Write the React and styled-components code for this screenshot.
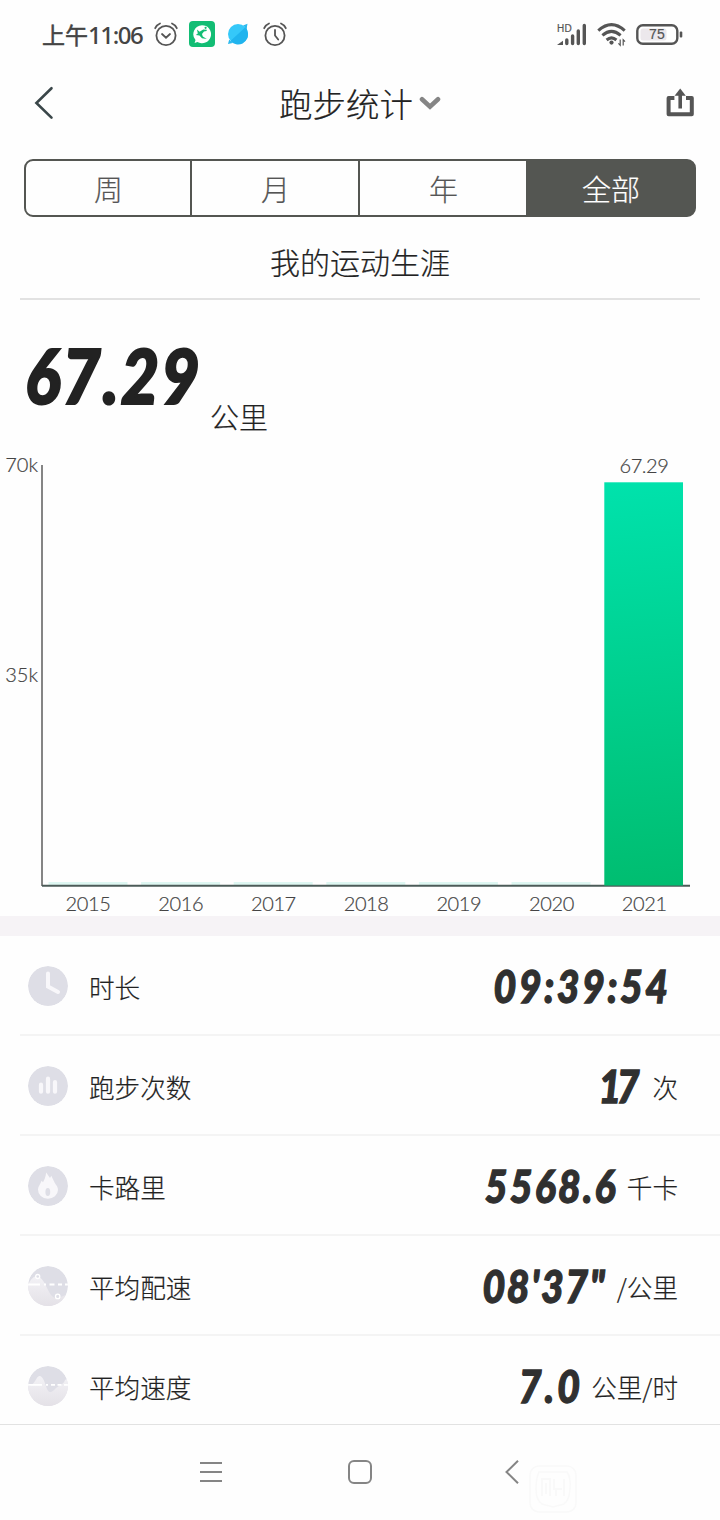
import React from 'react'
import styled, { createGlobalStyle } from 'styled-components'


const years = ['2015', '2016', '2017', '2018', '2019', '2020', '2021']
const tabs = ['周', '月', '年', '全部']

const stats = [
    { icon: 'clock', label: '时长', value: '09:39:54', unit: '', spacing: 2.9 },
    { icon: 'bars', label: '跑步次数', value: '17', unit: '次', spacing: -5 },
    { icon: 'flame', label: '卡路里', value: '5568.6', unit: '千卡', spacing: 2.6 },
    { icon: 'pace', label: '平均配速', value: '08\'37"', unit: '/公里', spacing: 1.9 },
    { icon: 'speed', label: '平均速度', value: '7.0', unit: '公里/时', spacing: 3.8 },
]


const AlarmIcon = ({ hands }) => (
    <svg width="24" height="26" viewBox="0 0 24 26" fill="none" stroke="#555" strokeWidth="1.8" strokeLinecap="round">
        <circle cx="12" cy="14.5" r="9.6" />
        <path d="M1.2 7.2Q2.6 3.8 6 2.5M22.8 7.2Q21.4 3.8 18 2.5" />
        <path d={hands} />
    </svg>
)

const RunnerIcon = () => (
    <svg width="26" height="26" viewBox="0 0 26 26">
        <rect width="26" height="26" rx="4" fill="#12bd74" />
        <path d="M13 4.2a9 9 0 1 1-4.6 16.7L5.6 22l.9-3A9 9 0 0 1 13 4.2z" fill="#fff" />
        <path d="M8 8.6l2.6 2.2 3.6-2.2 3.6.1-.2 1.2-2.6.6-2 2.4.8 2.6 4 2.4-4.8-.7-2.6-2.7-3.6-.4 2-1.6z" fill="#12bd74" />
        <circle cx="16.6" cy="6.8" r="1.1" fill="#12bd74" />
    </svg>
)

const PlanetIcon = () => (
    <svg width="22" height="22" viewBox="0 0 22 22">
        <circle cx="11" cy="11" r="10" fill="#35c8f9" />
        <path d="M19.2 3.5L3.4 18a10 10 0 0 0 17.3-9z" fill="#20b4ee" />
        <path d="M16 2.5L20.5.8 19.6 5.4zM1 21l1.2-4.4 3.4 3.4z" fill="#2ab9ee" />
    </svg>
)

const SignalIcon = () => (
    <svg width="31" height="26" viewBox="0 0 31 26">
        <SmallText x="0" y="9.7" fontSize="10">HD</SmallText>
        <g stroke="#555" strokeWidth="3.4" strokeLinecap="round">
            <path d="M9.8 21.5V18M15.6 21.5V14M21.3 21.5V9M27.3 21.5V3.5" />
            <path d="M3 22l2-1.4V22z" strokeWidth="2" />
        </g>
    </svg>
)

const WifiIcon = () => (
    <svg width="30" height="25" viewBox="0 0 30 25" fill="none" stroke="#555" strokeWidth="3">
        <path d="M1.3 8.6Q14.5-3.4 27.7 8.6M5.4 13.3Q14.5 5.4 23.6 13.3M9.6 18Q14.5 13.8 19.4 18" />
        <circle cx="14.5" cy="20.6" r="2.1" fill="#555" stroke="none" />
        <path d="M23.2 17.5v5.8l-1.8-2M26.2 23.5v-5.8l1.8 2" strokeWidth="1.2" />
    </svg>
)

const BatteryIcon = () => (
    <svg width="48" height="22" viewBox="0 0 48 22">
        <rect x="1.3" y="1.3" width="40" height="18.4" rx="5.5" fill="#fff" stroke="#555" strokeWidth="2.4" />
        <rect x="4.5" y="4.4" width="26" height="12.2" rx="2.5" fill="#ece8ec" />
        <rect x="43.7" y="7.5" width="2.6" height="6" rx="1" fill="#555" />
        <SmallText x="21" y="15.4" fontSize="14" textAnchor="middle">75</SmallText>
    </svg>
)

const BackIcon = () => (
    <svg width="20" height="34" viewBox="0 0 20 34" fill="none" stroke="#3a4649" strokeWidth="2.6" strokeLinecap="round">
        <path d="M17.5 2.2L2.4 17 17.5 31.6" />
    </svg>
)

const ChevronIcon = () => (
    <svg width="22" height="15" viewBox="0 0 22 15" fill="none" stroke="#858585" strokeWidth="4.6" strokeLinecap="round">
        <path d="M3 3.2l8 7.4 8-7.4" />
    </svg>
)

const ShareIcon = () => (
    <svg width="30" height="31" viewBox="0 0 30 31" fill="none" stroke="#555" strokeWidth="4" strokeLinejoin="round">
        <path d="M9.4 10H3.6v16.2h23.2V10H21" />
        <path d="M15.2 20.5V7" strokeWidth="3.6" />
        <path d="M15.2.6l5.6 7.2H9.6z" fill="#555" stroke="none" />
    </svg>
)

const StatIcon = ({ kind }) => (
    <Disc width="40" height="40" viewBox="0 0 40 40">
        <defs>
            <clipPath id={`disc-${kind}`}><circle cx="20" cy="20" r="20" /></clipPath>
            <linearGradient id={`hill-${kind}`} x1="0" y1="0" x2="0" y2="1">
                <stop offset="0" stopColor="#f3f2f6" />
                <stop offset="1" stopColor="#e4e1e7" />
            </linearGradient>
        </defs>
        <g clipPath={`url(#disc-${kind})`}>
            <circle cx="20" cy="20" r="20" fill="#dedee6" />
            {kind === 'clock' && (
                <path d="M20 7.5v13L30 26" fill="none" stroke="#f8f7fa" strokeWidth="4" strokeLinecap="round" />
            )}
            {kind === 'bars' && (
                <path d="M13 18.7v7M20 12.7v13M27 16v9.7" stroke="#f8f7fa" strokeWidth="4.2" strokeLinecap="round" />
            )}
            {kind === 'flame' && (
                <>
                    <path d="M18.2 6.5L22 12l1.3-2.2 3.5 7.2c1.6 2.4 3.2 3.8 3.2 7A10 9 0 0 1 10 23.6c0-3.2 2.2-5 3.6-8.8l1.4 1.4c1.6-2.6 2.6-5.6 3.2-9.7z" fill="#f8f7fa" />
                    <ellipse cx="19.8" cy="26" rx="2.4" ry="4" fill="#dedee6" />
                </>
            )}
            {kind === 'pace' && (
                <>
                    <path d="M0 19C4 11 7 9.5 10 10.5c6 2 8 11 13 18.5 4 5 8 3 17-1v12H0z" fill="url(#hill-pace)" />
                    <path d="M0 18.5h12M16 18.5h2M21.5 18.5h5M30 18.5h4M37 18.5h3" stroke="#fff" strokeWidth="2" />
                    <circle cx="9.7" cy="10.5" r="2" fill="#dedee6" stroke="#fff" strokeWidth="1.3" />
                    <circle cx="29.7" cy="30.4" r="2.2" fill="#dedee6" stroke="#fff" strokeWidth="1.3" />
                </>
            )}
            {kind === 'speed' && (
                <>
                    <path d="M0 20C7 20 8 10 11.5 10S17 17 19 23c3 6 6 2 9-1 4-3 8-4 9-8l3-2v28H0z" fill="url(#hill-speed)" />
                    <path d="M0 18.8h14M18 18.8h2M23 18.8h4M29.5 18.8h4M36 18.8h4" stroke="#fff" strokeWidth="1.8" />
                </>
            )}
        </g>
    </Disc>
)

const Chart = () => (
    <svg width="720" height="466" viewBox="0 450 720 466">
        <defs>
            <linearGradient id="bar" gradientUnits="userSpaceOnUse" x1="620" y1="482" x2="660" y2="886">
                <stop offset="0" stopColor="#00e2ac" />
                <stop offset="1" stopColor="#00bd70" />
            </linearGradient>
        </defs>
        <AxisText x="38" y="472" textAnchor="end" $tight>70k</AxisText>
        <AxisText x="38" y="682" textAnchor="end" $tight>35k</AxisText>
        {years.slice(0, 6).map((year, i) => (
            <rect key={year} x={48.5 + i * 92.6} y="882" width="79" height="3" fill="#def7f2" />
        ))}
        <path d="M42 465v421" stroke="#858585" strokeWidth="2" />
        <path d="M42 885.8h648" stroke="#4c5b58" strokeWidth="2" />
        <rect x="604.3" y="482.3" width="78.7" height="403.2" fill="url(#bar)" />
        <AxisText x="644" y="473" textAnchor="middle">67.29</AxisText>
        {years.map((year, i) => (
            <AxisText key={year} x={88 + i * 92.7} y="911" textAnchor="middle">{year}</AxisText>
        ))}
    </svg>
)


const App = () => {


    return (
        <Screen>
            <GlobalStyle />

            <StatusBar>
                <Clock>上午<Time>11:06</Time></Clock>
                <Notices>
                    <AlarmIcon hands="M8 13l4 3.7 4-3.7" />
                    <RunnerIcon />
                    <PlanetIcon />
                    <AlarmIcon hands="M12 9v5.5l3.2 4" />
                </Notices>
                <Signals>
                    <SignalIcon />
                    <WifiIcon />
                    <BatteryIcon />
                </Signals>
            </StatusBar>

            <Header>
                <BackIcon />
                <Title>跑步统计 <ChevronIcon /></Title>
                <ShareIcon />
            </Header>

            <Tabs>
                {tabs.map((tab) => (
                    <Tab key={tab} $active={tab === '全部'}>{tab}</Tab>
                ))}
            </Tabs>

            <Subtitle>我的运动生涯</Subtitle>

            <Total>
                <TotalValue>67.29</TotalValue>
                <TotalUnit>公里</TotalUnit>
            </Total>

            <Chart />
            <Band />

            <List>
                {stats.map((stat) => (
                    <Row key={stat.icon}>
                        <StatIcon kind={stat.icon} />
                        <Label>{stat.label}</Label>
                        <Value $spacing={stat.spacing} $alone={!stat.unit}>{stat.value}</Value>
                        {stat.unit && <Unit>{stat.unit}</Unit>}
                    </Row>
                ))}
            </List>

            <NavBar>
                <svg width="22" height="22" viewBox="0 0 22 22" stroke="#858585" strokeWidth="2">
                    <path d="M0 2h22M0 11h22M0 20h22" />
                </svg>
                <svg width="24" height="24" viewBox="0 0 24 24" fill="none" stroke="#858585" strokeWidth="2">
                    <rect x="1" y="1" width="22" height="22" rx="5" />
                </svg>
                <svg width="14" height="24" viewBox="0 0 14 24" fill="none" stroke="#858585" strokeWidth="2">
                    <path d="M13 .8L1.5 12 13 23.2" />
                </svg>
                <Stamp width="48" height="48" viewBox="0 0 48 48" fill="none" stroke="#f9f9f9" strokeWidth="1.5">
                    <rect x="1" y="1" width="46" height="46" rx="9" />
                    <path d="M10 7h28q4 5 3 17t-6 15l-11 3-11-3q-6-4-6-15t3-17z" />
                    <path d="M13 31V14h8v17M17 18v11M25 14v10h8M27 31V24M35 14v17" strokeWidth="2" />
                </Stamp>
            </NavBar>
        </Screen>
    )
}


const GlobalStyle = createGlobalStyle`
    body{
        margin:0;
        background:#fefefe;
    }
    *{
        box-sizing:border-box;
    }
    svg{
        display:block;
        flex-shrink:0;
    }
`

const Screen = styled.div`
    width:720px;
    height:1520px;
    display:flex;
    flex-direction:column;
    overflow:hidden;
    background:#fefefe;
    color:#222;
    font-family:"Noto Sans CJK SC", sans-serif;
    font-weight:300;
    -webkit-text-stroke:.2px;
`

const StatusBar = styled.div`
    height:69px;
    display:flex;
    align-items:center;
    padding:0 36px 0 42px;
    flex-shrink:0;
`

const Clock = styled.span`
    width:112px;
    font-size:23px;
    font-weight:400;
    line-height:30px;
    color:#444;
    white-space:nowrap;
    -webkit-text-stroke:.5px;
`

const Time = styled.span`
    font-family:"Noto Sans", sans-serif;
    font-size:24px;
    font-weight:500;
    letter-spacing:-1.4px;
    -webkit-text-stroke:0;
`

const Notices = styled.div`
    display:grid;
    grid-template-columns:35px 38px 36px 24px;
    align-items:center;
    margin-top:-2px;
`

const Signals = styled.div`
    display:flex;
    align-items:center;
    gap:9px;
    margin-left:auto;
`

const SmallText = styled.text`
    font-family:"Liberation Sans", sans-serif;
    letter-spacing:.2px;
    stroke:#555;
    stroke-width:.2px;
    fill:#555;
`

const Header = styled.header`
    height:68px;
    display:flex;
    align-items:center;
    justify-content:space-between;
    padding:0 25px 0 34px;
    flex-shrink:0;
`

const Title = styled.h1`
    display:flex;
    align-items:center;
    gap:6px;
    margin:0 0 0 1px;
    font-size:33.5px;
    font-weight:300;
    line-height:40px;
`

const Tabs = styled.div`
    height:58px;
    display:grid;
    grid-template-columns:165px 168px 168px 167px;
    margin:22px 24px 0;
    border:2px solid #545652;
    border-radius:9px;
    overflow:hidden;
    background:linear-gradient(90deg, transparent 90%, #545652 90%);
    flex-shrink:0;
`

const Tab = styled.div`
    display:flex;
    align-items:center;
    justify-content:center;
    border-left:2px solid #545652;
    margin-left:-1px;
    padding-bottom:1px;
    font-size:29px;
    color:${props => props.$active ? '#fff' : '#555'};
    background:${props => props.$active ? '#545652' : 'transparent'};

    &:first-child{
        border-left:0;
        margin-left:0;
    }
`

const Subtitle = styled.h2`
    height:83px;
    margin:0 20px;
    border-bottom:2px solid #e2e2e2;
    font-size:30px;
    font-weight:300;
    line-height:88px;
    text-align:center;
    flex-shrink:0;
`

const Total = styled.div`
    height:150px;
    display:flex;
    align-items:flex-start;
    padding-left:25px;
    flex-shrink:0;
`

const TotalValue = styled.strong`
    width:185px;
    margin-top:31px;
    font-family:Lato, sans-serif;
    font-size:76px;
    font-style:italic;
    font-weight:900;
    line-height:88px;
    letter-spacing:2.4px;
    white-space:nowrap;
    transform:scaleX(.87);
    transform-origin:left;
    -webkit-text-stroke:2.2px;
`

const TotalUnit = styled.span`
    margin-top:96px;
    font-size:29px;
    line-height:40px;
`

const AxisText = styled.text`
    font-family:Lato, sans-serif;
    font-size:20px;
    font-weight:300;
    letter-spacing:${props => props.$tight ? '0' : '-.4px'};
    stroke:#444;
    stroke-width:.2px;
    fill:#444;
`

const Band = styled.div`
    height:20px;
    background:#f6f3f6;
    flex-shrink:0;
`

const List = styled.div`
    height:488px;
    overflow:hidden;
    flex-shrink:0;
`

const Row = styled.div`
    height:100px;
    display:flex;
    align-items:center;
    margin-left:20px;
    padding:0 42px 0 8px;
    border-bottom:2px solid #f4f4f4;
`

const Disc = styled.svg`
    margin-top:2px;
`

const Label = styled.span`
    margin:2px auto 0 21px;
    font-size:25.6px;
`

const Value = styled.strong`
    margin-right:${props => (props.$alone ? 10 : 1.5) - props.$spacing}px;
    margin-top:2px;
    color:#303030;
    font-family:Lato, sans-serif;
    font-size:45px;
    font-style:italic;
    font-weight:900;
    line-height:54px;
    letter-spacing:${props => props.$spacing}px;
    transform:scaleX(.87);
    transform-origin:right;
    -webkit-text-stroke:1.3px;
`

const Unit = styled.span`
    margin:2px 0 0 10.5px;
    font-size:25.6px;
`

const NavBar = styled.nav`
    position:relative;
    height:96px;
    display:grid;
    grid-template-columns:148px 157px 14px;
    align-items:center;
    padding:0 0 2px 200px;
    border-top:1px solid #e2e2e2;
`

const Stamp = styled.svg`
    position:absolute;
    left:529px;
    top:40px;
`


export default App
